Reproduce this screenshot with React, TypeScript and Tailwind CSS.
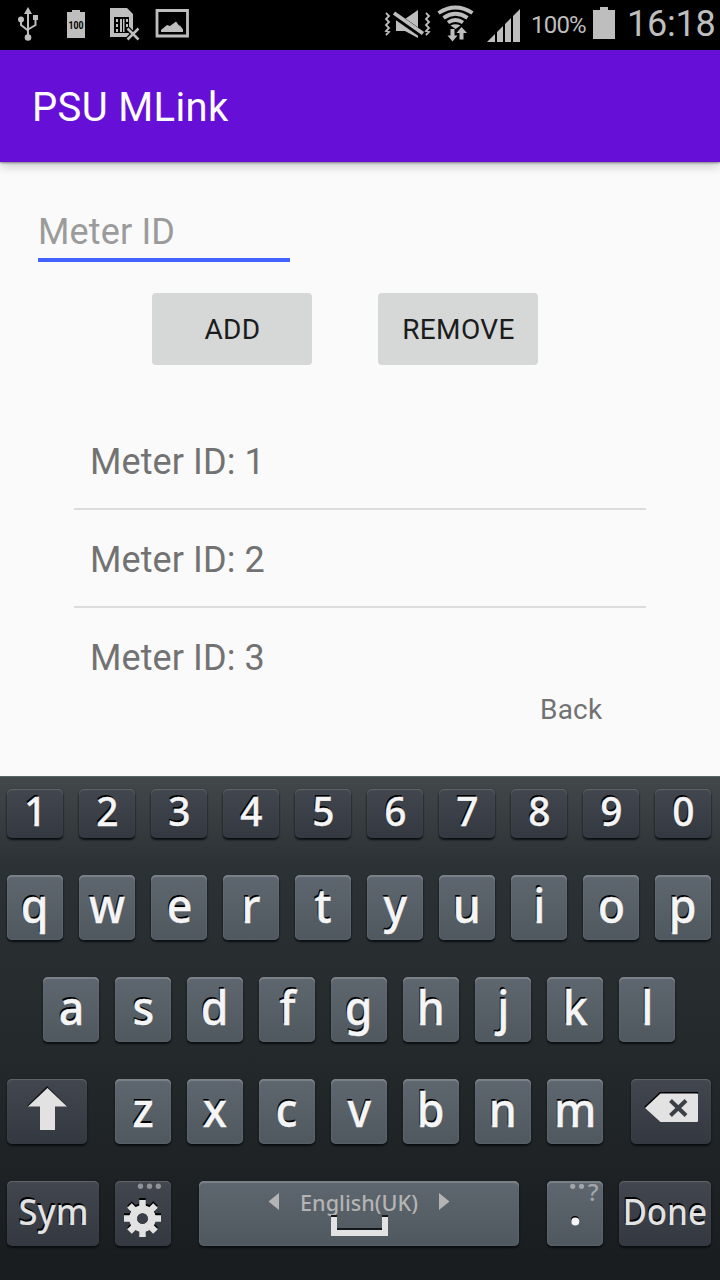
import type { ReactNode } from "react";

const DARK =
  "bg-linear-to-b from-[#42464e] to-[#343840] shadow-[inset_0_1px_1px_#62666b,0_2px_2px_#0b0e10,0_0_1px_#15191b]";
const LIGHT =
  "bg-linear-to-b from-[#5e666f] to-[#50585f] shadow-[inset_0_2px_1px_#7c8388,inset_0_0_2px_#69727a,0_2px_2px_#0b0e10,0_0_1px_#15191b]";

function Key({ children, dark, className = "w-14 h-[65px]" }: { children?: ReactNode; dark?: boolean; className?: string }) {
  return (
    <button className={`relative flex shrink-0 justify-center items-start rounded-[5px] ${dark ? DARK : LIGHT} ${className}`}>
      {children}
    </button>
  );
}

function Letter({ c }: { c: string }) {
  return (
    <Key>
      <span className="scale-x-[0.95] text-[47px] leading-[61px] font-medium text-[#f5f5f5] [-webkit-text-stroke:0.4px_#f5f5f5] [text-shadow:-1px_-2px_0_#000]">{c}</span>
    </Key>
  );
}

function StatusBar() {
  return (
    <header className="flex h-[50px] items-start bg-black pl-4 text-[#bebebe]">
      <svg width="26" height="50" viewBox="16 0 26 50" fill="#bebebe">
        <path d="M28 7l4 7h-8zM33 15h5v5h-5z" />
        <circle cx="21" cy="19.500" r="3" />
        <circle cx="28" cy="37.500" r="3.300" />
        <path d="M28 12v25M21 20v5l7 5.500M35.500 18v7l-7.500 4.500" fill="none" stroke="#bebebe" strokeWidth="2" />
      </svg>
      <svg className="ml-[23px]" width="22" height="50" viewBox="65 0 22 50">
        <path d="M72 10h8v2h5v26H67V12h5z" fill="#bebebe" />
        <text x="76" y="29" textAnchor="middle" fontSize="10" fontWeight="700" fontFamily="Roboto" textLength="15" lengthAdjust="spacingAndGlyphs" fill="#000">100</text>
      </svg>
      <svg className="ml-[22px]" width="32" height="50" viewBox="109 0 32 50">
        <path d="M110 8h17l6 6v16l-6 7h-17z" fill="#bebebe" />
        <path d="M114 17h15v16h-15z" fill="#000" />
        <path d="M116 19h2v3h-2zm0 5h2v3h-2zm0 5h2v3h-2zM120 19h2v13h-2zM123 19h1.500v13h-1.500zM126 19h2v3h-2zm0 5h2v3h-2z" fill="#bebebe" />
        <path d="M127.500 28.500l11 11M138.500 28.500l-11 11" stroke="#000" strokeWidth="5" />
        <path d="M127.500 28.500l11 11M138.500 28.500l-11 11" stroke="#bebebe" strokeWidth="2.500" />
      </svg>
      <svg className="ml-[14px]" width="35" height="50" viewBox="155 0 35 50">
        <path d="M157 10.500h30.500V36H157z" fill="none" stroke="#bebebe" strokeWidth="2.800" />
        <path d="M161 32v-2l6-5 3 1 6-4.500 3 4h1l3 4V32z" fill="#bebebe" />
      </svg>
      <div className="grow" />
      <svg width="48" height="50" viewBox="384 0 48 50" fill="#bebebe">
        <path d="M396 19h9l13-9v28l-13-7h-9z" />
        <path d="M393 14l30 21" stroke="#000" strokeWidth="7" />
        <path d="M394 13l29 20.500" stroke="#bebebe" strokeWidth="3.800" />
        <path d="M386 13l3 3-3 3 3 3-3 3 3 3-3 3 3 1-3 3M426 13l3 3-3 3 3 3-3 3 3 3-3 3 3 1-3 3" fill="none" stroke="#bebebe" strokeWidth="1.800" />
      </svg>
      <svg className="ml-[5px]" width="37" height="50" viewBox="437 0 37 50" fill="none" stroke="#bebebe">
        <path d="M438.500 13q17-11 34 0M443.500 17.800q12-8 24 0M448 22.500q7.500-5 15 0" strokeWidth="3.800" />
        <path d="M450.500 25.500q5-2.500 10 0l-5 3.500z" fill="#bebebe" stroke="none" />
        <path d="M450.500 29h4v6.500h3l-5 6-5-6h3zM459.500 39.500h4V33h3.500l-5.500-6-5 6h3z" fill="#bebebe" stroke="none" />
      </svg>
      <svg className="ml-[13px]" width="34" height="50" viewBox="487 0 34 50" fill="#bebebe">
        <path d="M487 42l8-8v8zM497 42V32l6-6v16zM505 42V24l6-6v24zM513 42V16l7-7v33z" />
      </svg>
      <span className="ml-[10px] w-[62px] text-2xl leading-[50px] tracking-[-0.8px]">100%</span>
      <svg width="22" height="50" viewBox="593 0 22 50">
        <path d="M600 7h8v3h7v29h-22V10h7z" fill="#bebebe" />
      </svg>
      <span className="ml-3 w-[93px] text-[36px] leading-[48px] tracking-[-0.2px]">16:18</span>
    </header>
  );
}

const METERS = ["1", "2", "3"];

function Keyboard() {
  return (
    <section className="flex h-[504px] flex-col bg-[linear-gradient(180deg,#43484b_0,#2c3135_90px,#252a2d_250px,#181c1f_100%)] pl-[7px] pt-[13px] font-['Noto_Sans',sans-serif] shadow-[inset_0_1px_0_#586663]">
      <div className="flex gap-4">
        {"1234567890".split("").map((c) => (
          <Key key={c} dark className="w-14 h-[49px]">
            <span className="scale-x-[0.97] text-[40px] leading-[44px] font-medium text-[#f5f5f5] [-webkit-text-stroke:0.4px_#f5f5f5] [text-shadow:-1px_-2px_0_#000]">{c}</span>
          </Key>
        ))}
      </div>
      <div className="mt-[37px] flex gap-4">
        {"qwertyuiop".split("").map((c) => <Letter key={c} c={c} />)}
      </div>
      <div className="mt-[37px] flex gap-4 pl-9">
        {"asdfghjkl".split("").map((c) => <Letter key={c} c={c} />)}
      </div>
      <div className="mt-[37px] flex">
        <Key dark className="w-20 h-[65px]">
          <svg width="80" height="65" viewBox="7 1079 80 65">
            <path d="M47 1086l-20 20h13v23h15v-23h12z" fill="#000" opacity="0.7" />
            <path d="M47.500 1088l-19.500 18.500h12v23.500h15v-23.500h12z" fill="#e2e2e2" />
          </svg>
        </Key>
        <div className="mx-7 flex gap-4">
          {"zxcvbnm".split("").map((c) => <Letter key={c} c={c} />)}
        </div>
        <Key dark className="w-20 h-[65px]">
          <svg width="80" height="65" viewBox="631 1079 80 65">
            <path d="M644 1107l16-15h38v28h-38z" fill="#000" />
            <path d="M645 1108l15.500-14.500h36.500q1 0 1 1v26.500q0 1-1 1h-36.500z" fill="#e2e2e2" />
            <path d="M670.500 1100.500l15.500 15M686 1100.500l-15.500 15" stroke="#3b3f47" strokeWidth="4" />
          </svg>
        </Key>
      </div>
      <div className="mt-[37px] flex">
        <Key dark className="w-[92px] h-[65px]">
          <span className="scale-x-[0.96] text-[36px] leading-[61px] font-medium text-[#e2e2e2] [text-shadow:-1px_-2px_0_#000]">Sym</span>
        </Key>
        <Key dark className="ml-4 w-14 h-[65px]">
          <svg width="56" height="65" viewBox="115 1181 56 65">
            <g fill="#8f9296">
              <circle cx="140.500" cy="1186.300" r="2.700" />
              <circle cx="149.500" cy="1186.300" r="2.700" />
              <circle cx="158.300" cy="1186.300" r="2.700" />
            </g>
            {[{ c: "#000", y: 1216.500 }, { c: "#e2e2e2", y: 1218.500 }].map(({ c, y }) => (
              <g key={c} transform={`translate(142.500 ${y})`} stroke={c} fill="none">
                <path d="M0-18.500v9M0 18.500v-9M-18.500 0h9M18.500 0h-9M-13-13l6 6M13-13l-6 6M-13 13l6-6M13 13l-6-6" strokeWidth="6.500" />
                <circle r="9.300" strokeWidth="8" />
              </g>
            ))}
            <circle cx="142.500" cy="1218.500" r="5.300" fill="#3b3f47" />
          </svg>
        </Key>
        <Key className="ml-7 w-80 h-[65px]">
          <svg width="320" height="65" viewBox="199 1181 320 65">
            <path d="M279 1193v17l-10.500-8.500zM439 1193v17l10.500-8.500z" fill="#b4b4b4" />
            <text x="359" y="1211" textAnchor="middle" fontSize="22" fontWeight="500" textLength="118" lengthAdjust="spacingAndGlyphs" fill="#b4b4b4">English(UK)</text>
            <path d="M331 1215h6v13h45v-13h6v19h-57z" fill="#15181b" />
            <path d="M331 1217h6v13h45v-13h6v19h-57z" fill="#e2e2e2" />
          </svg>
        </Key>
        <Key className="ml-7 w-14 h-[65px]">
          <svg className="overflow-visible" width="56" height="65" viewBox="547 1181 56 65">
            <circle cx="572.700" cy="1186.300" r="2.600" fill="#a2a6aa" />
            <circle cx="581.500" cy="1186.300" r="2.600" fill="#a2a6aa" />
            <text x="593" y="1201" textAnchor="middle" fontSize="24" fontWeight="500" fill="#a2a6aa">?</text>
            <circle cx="575" cy="1220" r="4" fill="#000" />
            <circle cx="575.300" cy="1221.500" r="4" fill="#f5f5f5" />
          </svg>
        </Key>
        <Key dark className="ml-4 w-[92px] h-[65px]">
          <span className="scale-x-[0.92] text-[36px] leading-[61px] font-medium text-[#e2e2e2] [text-shadow:-1px_-2px_0_#000]">Done</span>
        </Key>
      </div>
    </section>
  );
}

export default function App() {
  return (
    <div className="flex h-[1280px] w-[720px] flex-col overflow-hidden bg-[#fafafa] font-['Roboto',sans-serif]">
      <StatusBar />
      <div className="h-28 bg-[#6610d7] pl-8 pt-0.5 text-[40px] leading-[112px] tracking-[0.35px] text-white shadow-[0_1px_2px_rgba(0,0,0,0.4),0_4px_10px_rgba(0,0,0,0.2)]">
        PSU MLink
      </div>
      <main className="flex h-[614px] flex-col">
        <div className="ml-[38px] mt-[49px] h-[51px] w-[252px] border-b-4 border-[#4263ff] text-[36px] leading-[42px] tracking-[0.15px] text-[#9b9b9b]">Meter ID</div>
        <div className="ml-[152px] mt-[31px] flex gap-[66px] text-[28px] tracking-[0.4px] text-[#1b1c1c]">
          <button className="h-[72px] w-40 rounded bg-[#d6d7d7] pl-px pt-0.5">ADD</button>
          <button className="h-[72px] w-40 rounded bg-[#d6d7d7] pl-px pt-0.5">REMOVE</button>
        </div>
        <ul className="mx-[74px] mt-[47px] h-[280px] text-[36px] leading-[100px] tracking-[0.1px] text-[#727272]">
          {METERS.map((m) => (
            <li key={m} className="h-[98px] border-b-2 border-[#dcdcdc] pl-4 last:h-[84px] last:border-0">Meter ID: {m}</li>
          ))}
        </ul>
        <div className="ml-[540px] mt-px text-[28px] leading-[33px] tracking-[0.2px] text-[#727272]">Back</div>
      </main>
      <Keyboard />
    </div>
  );
}
